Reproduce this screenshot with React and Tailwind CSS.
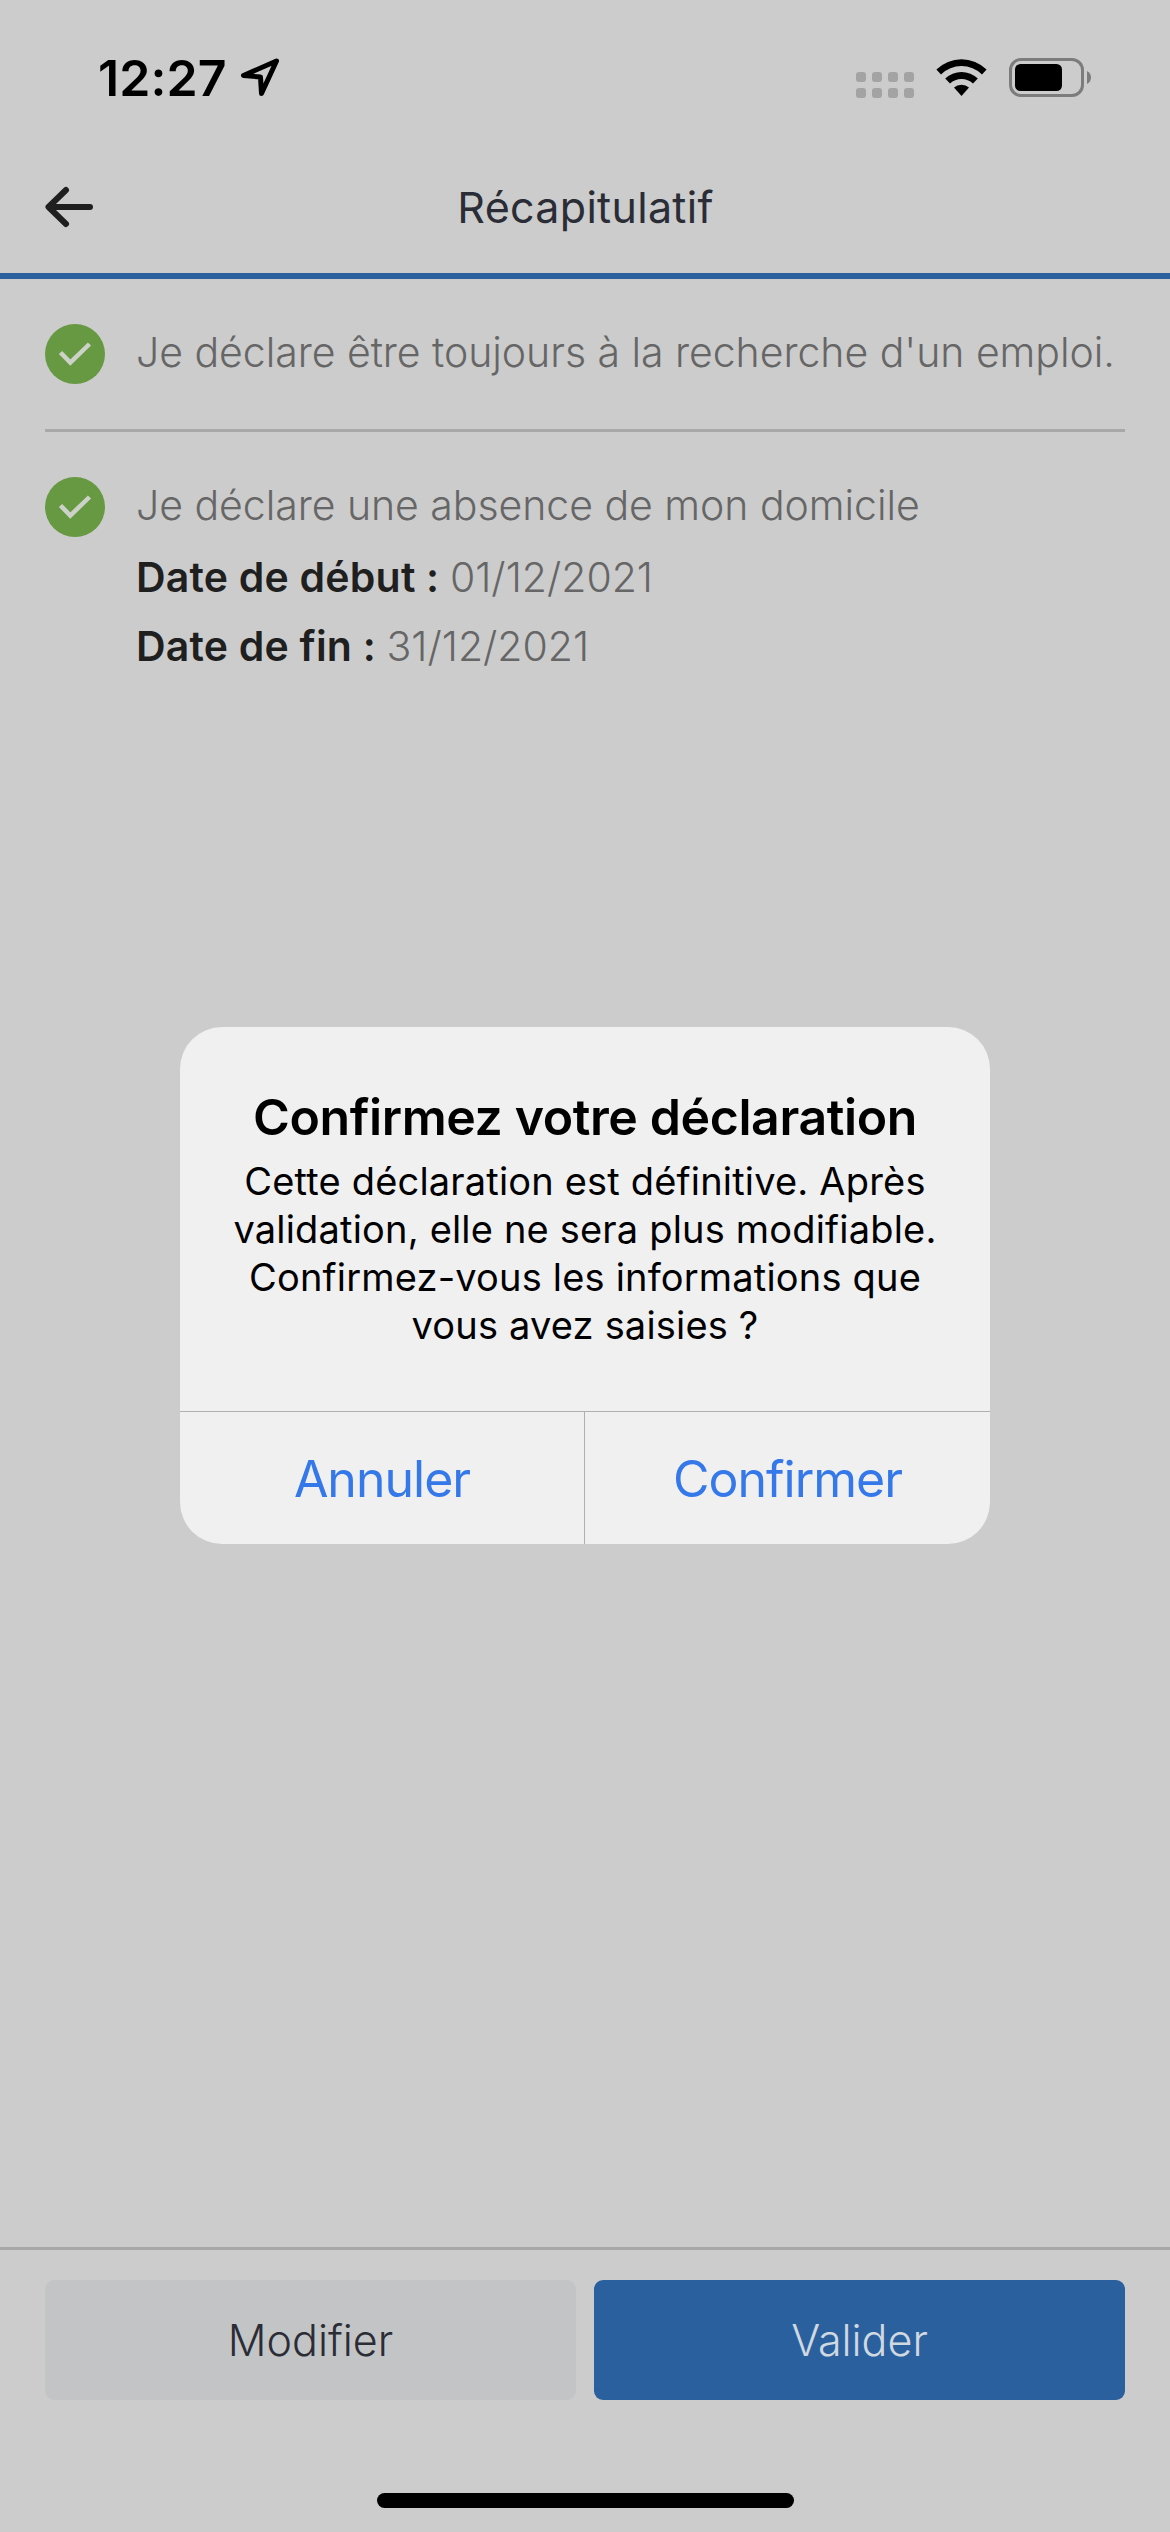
import React from 'react';

const StatusBar = () => (
  <div className="h-[141px] flex items-start pl-[98px] pr-[78px]">
    <div className="flex items-center pt-[47px]">
      <span className="text-[50px] leading-[62px] font-semibold tracking-[0.1px] text-black w-[142px] whitespace-nowrap">12:27</span>
      <svg className="w-10 h-10" viewBox="0 0 40 40" fill="none" stroke="#000" strokeWidth="5" strokeLinejoin="round">
        <path d="M36.5 3 3.5 17.5 20.5 19 21.5 35.5Z" />
      </svg>
    </div>
    <div className="ml-auto flex pt-[58px]">
      <div className="grid grid-cols-4 gap-[6px] pt-[14px] mr-[22px]">
        {[...Array(8)].map((_, i) => (
          <span key={i} className="w-[10px] h-[10px] rounded-[3px] bg-[#a3a3a3]" />
        ))}
      </div>
      <svg className="w-[51px] h-[39px] mr-[22px]" viewBox="0 0 51 39">
        <path d="M0.4 11.5A36 36 0 0 1 50.6 11.5L46 16.4A29.5 29.5 0 0 0 5 16.4Z" />
        <path d="M9.2 20.6A23.4 23.4 0 0 1 41.8 20.6L37 25.6A16.6 16.6 0 0 0 14 25.6Z" />
        <path d="M18 29.6A11 11 0 0 1 33 29.6L25.5 38Z" />
      </svg>
      <svg className="w-[83px] h-[39px]" viewBox="0 0 83 39">
        <rect x="1.5" y="1.5" width="72" height="36" rx="10.5" fill="none" stroke="#7c7c7c" strokeWidth="3" />
        <rect x="6" y="6" width="47" height="27" rx="5.5" />
        <path d="M78 13C80.8 14.2 82 16.8 82 19.5S80.8 24.8 78 26Z" fill="#7c7c7c" />
      </svg>
    </div>
  </div>
);

const Header = () => (
  <header className="h-[138px] flex items-center px-[45px] border-b-[6px] border-[#2a609e]">
    <svg className="w-12 h-[42px]" viewBox="0 0 48 42" fill="none" stroke="#1f1f1f" strokeWidth="6" strokeLinecap="round" strokeLinejoin="round">
      <path d="M21 4 3.5 21 21 38M4 21H45" />
    </svg>
    <h1 className="flex-1 text-center text-[43px] leading-[60px] tracking-[0.3px] text-[#2b2d36] pr-[47px]">Récapitulatif</h1>
  </header>
);

const CheckBadge = () => (
  <svg className="w-[60px] h-[60px] shrink-0" viewBox="0 0 60 60">
    <circle cx="30" cy="30" r="30" fill="#679943" />
    <path d="M15.5 28.5 25.3 38.5 44.5 20" fill="none" stroke="#ccd2c7" strokeWidth="4.5" />
  </svg>
);

const DateRow = ({ label, value }) => (
  <p className="leading-[69px]">
    <span className="font-semibold text-[#1f1f1f] tracking-[0.2px]">{label} : </span>
    <span>{value}</span>
  </p>
);

const Declaration = ({ text, children }) => (
  <div className="flex items-start gap-[31px]">
    <CheckBadge />
    <div className="text-[41px] font-light text-[#666666] whitespace-nowrap">
      <p className="leading-[56px] tracking-[-0.04px]">{text}</p>
      {children && <div className="mt-[10px]">{children}</div>}
    </div>
  </div>
);

const Footer = () => (
  <footer className="mt-auto h-[285px] flex flex-col items-center border-t-[3px] border-[#a8a8a8] px-[45px] pt-[30px] pb-6">
    <div className="w-full grid grid-cols-2 gap-[18px] text-[43px] font-light">
      <button className="h-[120px] rounded-[9px] bg-[#c3c4c6] text-[#2b2d36]">Modifier</button>
      <button className="h-[120px] rounded-[9px] bg-[#2b609f] text-[#d0d8e0]">Valider</button>
    </div>
    <div className="mt-auto w-[417px] h-[15px] rounded-full bg-black" />
  </footer>
);

const ConfirmDialog = () => (
  <div role="dialog" className="absolute left-[180px] top-[1027px] w-[810px] h-[517px] rounded-[42px] bg-[#f0f0f0] overflow-hidden flex flex-col text-center text-black">
    <div className="flex-1 pt-[60px]">
      <h2 className="text-[50px] leading-[60px] font-semibold tracking-[-0.4px] whitespace-nowrap">Confirmez votre déclaration</h2>
      <p className="mt-[10px] text-[38px] leading-[48px] tracking-[0.18px] whitespace-nowrap">
        Cette déclaration est définitive. Après<br />
        validation, elle ne sera plus modifiable.<br />
        Confirmez-vous les informations que<br />
        vous avez saisies ?
      </p>
    </div>
    <div className="h-[133px] grid grid-cols-2 border-t border-[#b0b0b2] text-[50px] tracking-[-1px] text-[#3478ea]">
      <button className="border-r border-[#b0b0b2] pt-[2px]">Annuler</button>
      <button className="pt-[2px]">Confirmer</button>
    </div>
  </div>
);

export default function App() {
  return (
    <div className="relative w-[1170px] h-[2532px] flex flex-col bg-[#cccccc] font-['Inter','Liberation_Sans',sans-serif]">
      <StatusBar />
      <Header />
      <main className="px-[45px] pt-[45px]">
        <Declaration text="Je déclare être toujours à la recherche d'un emploi." />
        <div className="h-[3px] my-[45px] bg-[#a8a8a8]" />
        <Declaration text="Je déclare une absence de mon domicile">
          <DateRow label="Date de début" value="01/12/2021" />
          <DateRow label="Date de fin" value="31/12/2021" />
        </Declaration>
      </main>
      <Footer />
      <ConfirmDialog />
    </div>
  );
}
